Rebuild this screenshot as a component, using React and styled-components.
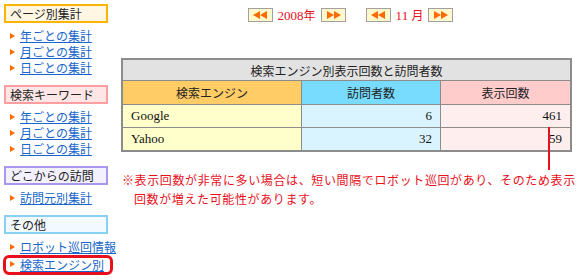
import React from 'react'
import styled, { createGlobalStyle } from 'styled-components'

const GlobalStyle = createGlobalStyle`
  body {
    margin: 0;
    background: #fff;
    font-family: "Noto Sans CJK JP", "Liberation Sans", sans-serif;
  }
`

const Page = styled.div`
  display: flex;
  width: 580px;
  height: 280px;
  overflow: hidden;
`

const Sidebar = styled.div`
  width: 117px;
  padding: 4px 0 0 4px;
  box-sizing: border-box;
  flex-shrink: 0;
`

const Section = styled.div`
  margin-bottom: 9px;
`

const SectionHead = styled.div`
  width: 104px;
  height: 19px;
  box-sizing: border-box;
  border: 2px solid ${({ $border }) => $border};
  background: ${({ $bg }) => $bg};
  font-size: 12px;
  line-height: 15px;
  padding-left: 4px;
  color: #222;
`

const LinkList = styled.ul`
  list-style: none;
  margin: 0;
  padding: 5px 0 0 0;
`

const LinkItem = styled.li`
  position: relative;
  box-sizing: border-box;
  font-size: 12px;
  margin-left: ${({ $marked }) => ($marked ? '-1px' : '0')};
  width: ${({ $marked }) => ($marked ? '110px' : 'auto')};
  border: ${({ $marked }) => ($marked ? '3px solid #e8101c' : '0')};
  border-radius: ${({ $marked }) => ($marked ? '6px' : '0')};
  height: ${({ $marked }) => ($marked ? '20px' : '16px')};
  line-height: ${({ $marked }) => ($marked ? '14px' : '16px')};
  padding-left: ${({ $marked }) => ($marked ? '14px' : '16px')};

  &::before {
    content: '';
    position: absolute;
    left: ${({ $marked }) => ($marked ? '4px' : '6px')};
    top: ${({ $marked }) => ($marked ? '3px' : '5px')};
    border-left: 5px solid #ff6a00;
    border-top: 3.5px solid transparent;
    border-bottom: 3.5px solid transparent;
  }
`

const Link = styled.a`
  color: #1a66cc;
  text-decoration: underline;
`

const Main = styled.div`
  flex: 1;
  padding: 8px 0 0 4px;
  position: relative;
`

const Nav = styled.div`
  display: flex;
  justify-content: center;
  align-items: center;
  height: 14px;
  gap: 20px;
`

const NavGroup = styled.div`
  display: flex;
  align-items: center;
  gap: 3px;
`

const ArrowBtn = styled.div`
  width: 25px;
  height: 14px;
  box-sizing: border-box;
  border: 1px solid #a0a0a0;
  background: #fff8cc;
  display: flex;
  align-items: center;
  justify-content: center;
`

const NavLabel = styled.span`
  color: #e8101c;
  font-family: "Liberation Serif", "Noto Sans CJK JP", serif;
  font-size: 13px;
  line-height: 14px;
  padding: 0 2px;
`

const NavKanji = styled.span`
  font-family: "Noto Sans CJK JP", sans-serif;
  font-size: 12px;
`

const Table = styled.table`
  margin-top: 36px;
  width: 451px;
  border-collapse: collapse;
  border: 2px solid #8c8c8c;
  font-size: 12px;
`

const TitleCell = styled.th`
  background: #e2e2e2;
  height: 20px;
  font-weight: normal;
  border: 1px solid #8c8c8c;
  color: #222;
  text-align: center;
  padding: 0;
`

const HeadCell = styled.th`
  background: ${({ $bg }) => $bg};
  height: 23px;
  font-weight: normal;
  border: 1px solid #8c8c8c;
  color: #222;
  padding: 0;
  width: ${({ $w }) => $w};
`

const DataCell = styled.td`
  background: ${({ $bg }) => $bg};
  height: 22px;
  border: 1px solid #8c8c8c;
  font-family: "Liberation Serif", serif;
  font-size: 13px;
  color: #111;
  text-align: ${({ $align }) => $align || 'left'};
  padding: 0 8px;
`

const Note = styled.p`
  margin: 18px 0 0 1px;
  color: #e8101c;
  font-size: 12px;
  line-height: 19px;
  letter-spacing: 0.62px;
  padding-left: 12px;
  text-indent: -12px;
  width: 446px;
  white-space: nowrap;
`

const Pointer = styled.div`
  position: absolute;
  left: 431px;
  top: 127px;
  width: 2px;
  height: 43px;
  background: #e8101c;
`

const Arrows = ({ dir }) => (
  <svg width="15" height="8" viewBox="0 0 15 8">
    {dir === 'left' ? (
      <g fill="#ff6a00">
        <polygon points="0,4 7,0 7,8" />
        <polygon points="7,4 14,0 14,8" />
      </g>
    ) : (
      <g fill="#ff6a00">
        <polygon points="1,0 8,4 1,8" />
        <polygon points="8,0 15,4 8,8" />
      </g>
    )}
  </svg>
)

const sections = [
  { title: 'ページ別集計', border: '#ffb400', bg: '#fff6e3', links: ['年ごとの集計', '月ごとの集計', '日ごとの集計'] },
  { title: '検索キーワード', border: '#ff9ea0', bg: '#ffe6e6', links: ['年ごとの集計', '月ごとの集計', '日ごとの集計'] },
  { title: 'どこからの訪問', border: '#a996ee', bg: '#f4f1ff', links: ['訪問元別集計'] },
  { title: 'その他', border: '#88d0f4', bg: '#f2faff', links: ['ロボット巡回情報', '検索エンジン別'] },
]

const rows = [
  { name: 'Google', visitors: 6, views: 461 },
  { name: 'Yahoo', visitors: 32, views: 59 },
]

export default function App() {
  return (
    <Page>
      <GlobalStyle />
      <Sidebar>
        {sections.map((s) => (
          <Section key={s.title}>
            <SectionHead $border={s.border} $bg={s.bg}>{s.title}</SectionHead>
            <LinkList>
              {s.links.map((l) => (
                <LinkItem key={l} $marked={l === '検索エンジン別'}>
                  <Link>{l}</Link>
                </LinkItem>
              ))}
            </LinkList>
          </Section>
        ))}
      </Sidebar>
      <Main>
        <Nav>
          <NavGroup>
            <ArrowBtn><Arrows dir="left" /></ArrowBtn>
            <NavLabel>2008<NavKanji>年</NavKanji></NavLabel>
            <ArrowBtn><Arrows dir="right" /></ArrowBtn>
          </NavGroup>
          <NavGroup>
            <ArrowBtn><Arrows dir="left" /></ArrowBtn>
            <NavLabel>11 <NavKanji>月</NavKanji></NavLabel>
            <ArrowBtn><Arrows dir="right" /></ArrowBtn>
          </NavGroup>
        </Nav>
        <Table>
          <thead>
            <tr>
              <TitleCell colSpan={3}>検索エンジン別表示回数と訪問者数</TitleCell>
            </tr>
            <tr>
              <HeadCell $bg="#ffcc66" $w="178px">検索エンジン</HeadCell>
              <HeadCell $bg="#77dcff" $w="138px">訪問者数</HeadCell>
              <HeadCell $bg="#ffcccc">表示回数</HeadCell>
            </tr>
          </thead>
          <tbody>
            {rows.map((r) => (
              <tr key={r.name}>
                <DataCell $bg="#ffffcc">{r.name}</DataCell>
                <DataCell $bg="#daf4ff" $align="right">{r.visitors}</DataCell>
                <DataCell $bg="#ffeeee" $align="right">{r.views}</DataCell>
              </tr>
            ))}
          </tbody>
        </Table>
        <Note>
          ※表示回数が非常に多い場合は、短い間隔でロボット巡回があり、そのため表示
          <br />
          回数が増えた可能性があります。
        </Note>
        <Pointer />
      </Main>
    </Page>
  )
}
